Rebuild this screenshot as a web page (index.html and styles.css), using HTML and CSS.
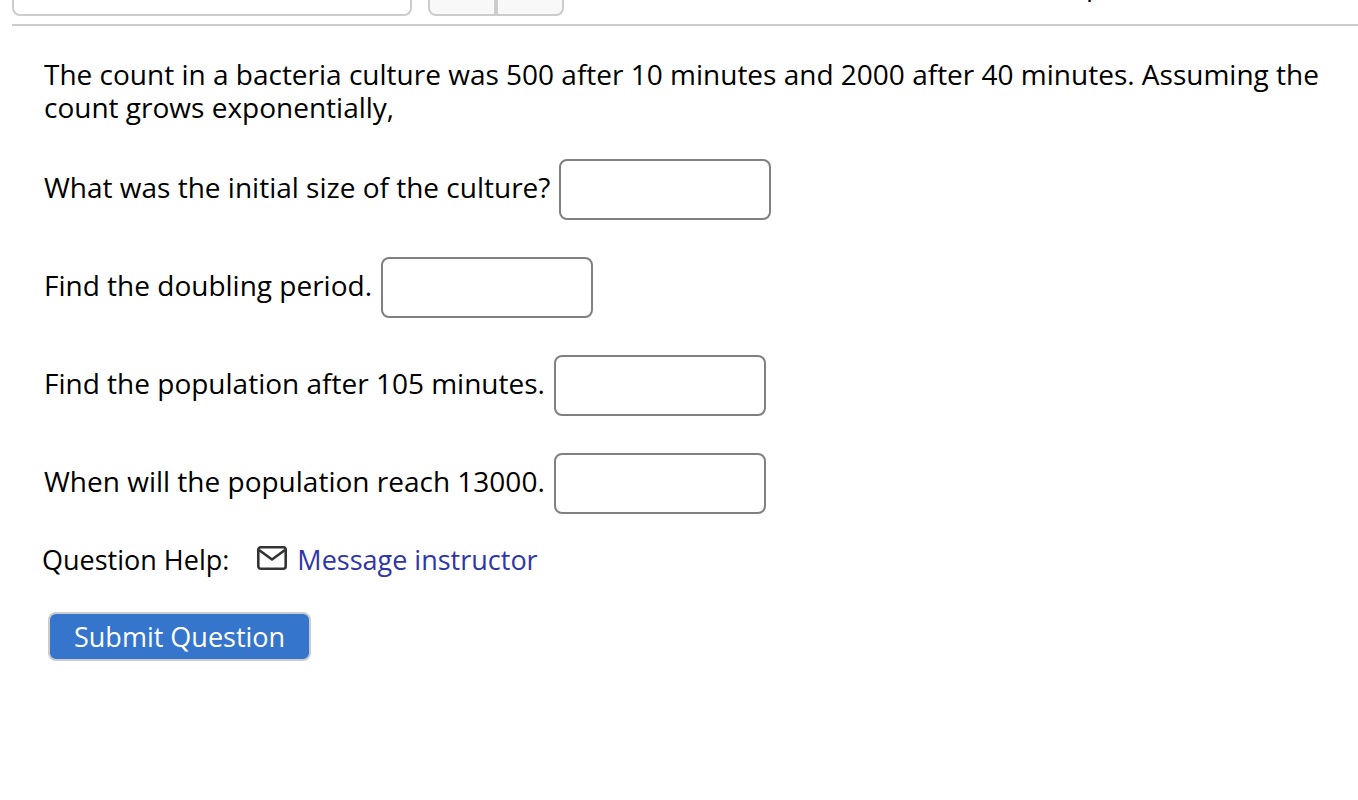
FILE: index.html
```
<!DOCTYPE html>
<html lang="en">
  <head>
    <meta charset="UTF-8">
    <title>Question</title>
    <link rel="stylesheet" href="styles.css">
  </head>
  <body>
    <div class="topbar">
      <button class="qselect" type="button" aria-label="Select question"></button>
      <div class="arrows">
        <button class="arrow prev" type="button" aria-label="Previous question"></button>
        <button class="arrow next" type="button" aria-label="Next question"></button>
      </div>
      <span class="points">pt</span>
    </div>
    <form class="question">
      <p class="intro">The count in a bacteria culture was 500 after 10 minutes and 2000 after 40 minutes. Assuming the count grows exponentially,</p>
      <div class="part">
        <label for="qn0">What was the initial size of the culture?</label>
        <input class="ans" type="text" id="qn0">
      </div>
      <div class="part">
        <label for="qn1">Find the doubling period.</label>
        <input class="ans" type="text" id="qn1">
      </div>
      <div class="part">
        <label for="qn2">Find the population after 105 minutes.</label>
        <input class="ans" type="text" id="qn2">
      </div>
      <div class="part">
        <label for="qn3">When will the population reach 13000.</label>
        <input class="ans" type="text" id="qn3">
      </div>
      <div class="help">
        <span>Question Help:</span>
        <a class="msg" href="#">
          <svg class="mail" width="30" height="24" viewBox="0 0 30 24" fill="none" stroke="#333" stroke-width="2.6" stroke-linejoin="round" aria-hidden="true">
            <rect x="1.3" y="1.3" width="27.4" height="21.4" rx="2.5"/>
            <path d="M2 4 15 13.5 28 4"/>
          </svg>
          Message instructor
        </a>
      </div>
      <button class="submit" type="submit">Submit Question</button>
    </form>
  </body>
</html>
```

FILE: styles.css
```
body {
  margin: 0;
  background: #fff;
  color: #000;
  font-family: "Trebuchet MS", "Open Sans", sans-serif;
  font-size: 28px;
  line-height: 33px;
}

/* question picker bar */
.topbar {
  display: flex;
  align-items: flex-start;
  height: 24px;
  margin-left: 12px;
  border-bottom: 2px solid #ccc;
}
.qselect {
  box-sizing: border-box;
  width: 400px;
  height: 16px;
  padding: 0;
  background: #fff;
  border: 2px solid #ccc;
  border-top: 0;
  border-radius: 0 0 8px 8px;
}
.arrows {
  display: flex;
  margin-left: 16px;
}
.arrow {
  box-sizing: border-box;
  width: 68px;
  height: 16px;
  padding: 0;
  background: #f8f8f8;
  border: 2px solid #ccc;
  border-top: 0;
}
.prev { border-radius: 0 0 0 8px; }
.next { border-radius: 0 0 8px 0; }
.points {
  margin: -32px 245px 0 auto;
}

.question {
  padding: 32px 30px 32px 44px;
}
.intro {
  margin: 0 0 35px;
}
.part {
  display: flex;
  align-items: center;
  gap: 9px;
  margin-bottom: 37px;
}
.part label {
  padding-bottom: 4px;
}
.ans {
  box-sizing: border-box;
  width: 212px;
  height: 61px;
  padding: 8px;
  border: 2px solid #808080;
  border-radius: 8px;
  font: inherit;
}
.help {
  display: flex;
  gap: 28px;
  margin: -8px 0 36px -2px;
  font-size: 27px;
}
.msg {
  display: flex;
  align-items: center;
  gap: 10px;
  color: #2e36a8;
  text-decoration: none;
}
.mail {
  padding-bottom: 4px;
}
.submit {
  height: 49px;
  margin-left: 4px;
  padding: 0 24px;
  background: #3575cb;
  border: 2px solid #ccc;
  border-radius: 8px;
  color: #fff;
  font: inherit;
  font-size: 27px;
}
```
